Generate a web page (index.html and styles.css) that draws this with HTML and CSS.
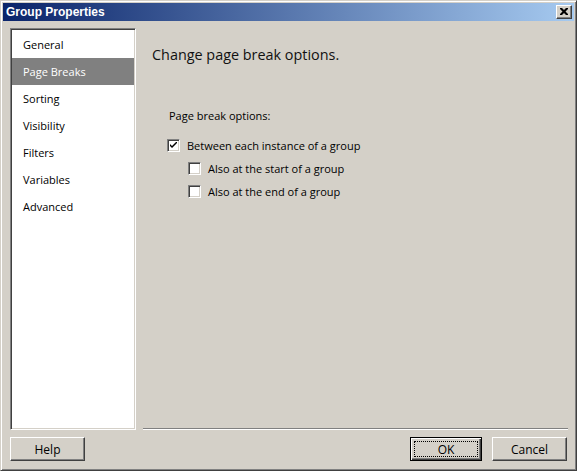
FILE: index.html
```html
<!DOCTYPE html>
<html>
<head>
<meta charset="utf-8">
<link rel="stylesheet" href="styles.css">
</head>
<body>
<div class="window">
  <div class="titlebar">
    <span class="title">Group Properties</span>
    <span class="close"><svg width="8" height="7" viewBox="0 0 8 7"><path d="M0 0h2l2 2 2-2h2v1l-2.5 2.5L8 6v1H6L4 5 2 7H0V6l2.5-2.5L0 1z" fill="#000"/></svg></span>
  </div>
  <div class="main">
    <ul class="nav">
      <li>General</li>
      <li class="active">Page Breaks</li>
      <li>Sorting</li>
      <li>Visibility</li>
      <li>Filters</li>
      <li>Variables</li>
      <li>Advanced</li>
    </ul>
    <div class="content">
      <h1 class="heading">Change page break options.</h1>
      <div class="group-label">Page break options:</div>
      <label class="check"><span class="box checked"><svg width="7" height="7" viewBox="0 0 7 7"><path d="M0 2l2 2 5-5v2l-5 5-2-2z" fill="#000"/></svg></span>Between each instance of a group</label>
      <label class="check sub"><span class="box"></span>Also at the start of a group</label>
      <label class="check sub"><span class="box"></span>Also at the end of a group</label>
    </div>
  </div>
  <div class="footer">
    <button class="btn">Help</button>
    <div class="spacer"></div>
    <button class="btn default"><span class="focus">OK</span></button>
    <button class="btn">Cancel</button>
  </div>
</div>
</body>
</html>
```

FILE: styles.css
```css
* { box-sizing: border-box; }
html, body { margin: 0; padding: 0; }
body { width: 577px; height: 471px; background: #d4d0c8; font-family: "Open Sans", "DejaVu Sans", sans-serif; font-size: 11px; color: #000; }
.window {
  width: 577px; height: 471px;
  background: #d4d0c8;
  border-top: 1px solid #d4d0c8; border-left: 1px solid #d4d0c8;
  border-right: 1px solid #404040; border-bottom: 1px solid #404040;
  box-shadow: inset 1px 1px 0 #fff, inset -1px -1px 0 #808080;
  padding: 2px;
  display: flex; flex-direction: column;
}
.titlebar {
  height: 18px;
  background: linear-gradient(to right, #0a246a, #a6caf0);
  display: flex; align-items: center; justify-content: space-between;
  padding: 0 2px 0 3px;
}
.title { color: #fff; font-family: "Liberation Sans", Arial, sans-serif; font-weight: bold; font-size: 12px; }
.close {
  width: 16px; height: 14px; background: #d4d0c8;
  border-top: 1px solid #fff; border-left: 1px solid #fff;
  border-right: 1px solid #404040; border-bottom: 1px solid #404040;
  box-shadow: inset -1px -1px 0 #808080;
  display: flex; align-items: center; justify-content: center; padding-bottom: 1px;
}
.main { display: flex; height: 410px; padding: 7px 6px 0 7px; }
.nav {
  list-style: none; margin: 0; padding: 2px 1px 0 1px;
  width: 126px; height: 402px; background: #fff;
  border-top: 1px solid #808080; border-left: 1px solid #808080;
  border-right: 1px solid #fff; border-bottom: 1px solid #fff;
  box-shadow: inset 1px 1px 0 #404040, inset -1px -1px 0 #d4d0c8;
}
.nav li { height: 27px; line-height: 27px; padding-left: 11px; font-size: 11px; color: #000; }
.nav li.active { background: #808080; color: #fff; }
.content {
  flex: 1; margin-left: 7px; height: 402px;
  border-bottom: 1px solid #fff;
  box-shadow: inset 0 -1px 0 #808080;
  padding: 16px 0 0 9px;
}
.heading { margin: 0 0 43px 0; font-size: 14.4px; font-weight: normal; color: #111; line-height: 22px; }
.group-label { font-size: 11px; margin-left: 17px; line-height: 14px; margin-bottom: 11px; }
.check { display: flex; align-items: center; margin-left: 15px; height: 23px; font-size: 11px; }
.check.sub { margin-left: 36px; }
.box {
  width: 13px; height: 13px; background: #fff; margin-right: 7px;
  border-top: 1px solid #808080; border-left: 1px solid #808080;
  border-right: 1px solid #fff; border-bottom: 1px solid #fff;
  box-shadow: inset 1px 1px 0 #404040, inset -1px -1px 0 #d4d0c8;
  display: flex; align-items: center; justify-content: center;
}
.footer { display: flex; align-items: center; padding: 6px 7px 0 7px; gap: 10px; }
.spacer { flex: 1; }
.btn {
  width: 75px; height: 24px; background: #d4d0c8; font-family: "Open Sans", "DejaVu Sans", sans-serif; font-size: 12px; color: #000;
  border-top: 1px solid #fff; border-left: 1px solid #fff;
  border-right: 1px solid #404040; border-bottom: 1px solid #404040;
  box-shadow: inset -1px -1px 0 #808080;
  padding: 0; margin: 0;
}
.btn.default { width: 72px; border: 1px solid #000; box-shadow: inset 1px 1px 0 #fff, inset -1px -1px 0 #404040, inset -2px -2px 0 #808080; padding: 3px; }
.focus { display: flex; align-items: center; justify-content: center; width: 100%; height: 100%; border: 1px dotted #000; }
```
